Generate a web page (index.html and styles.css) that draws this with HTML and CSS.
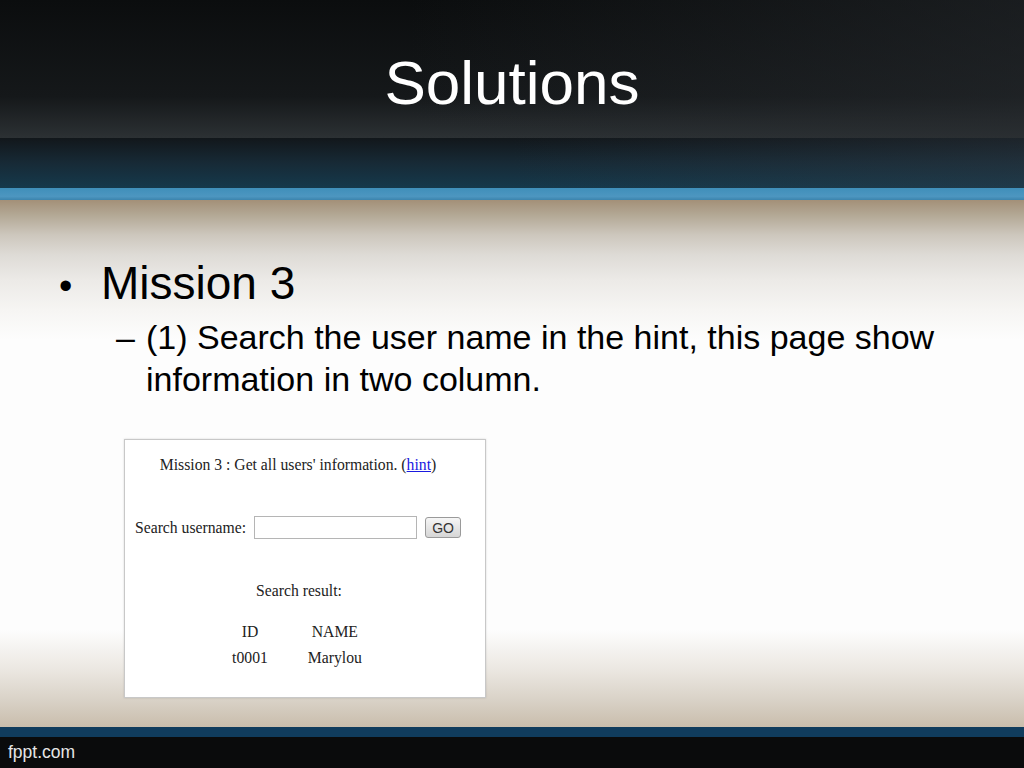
FILE: index.html
```html
<!DOCTYPE html>
<html lang="en">
<head>
  <meta charset="UTF-8" />
  <title>Solutions</title>
  <link rel="stylesheet" href="styles.css">
</head>
<body>

  <div class="slide">
    <!-- Title band -->
    <header class="slide-head">
      <div class="head-top">
        <h1>Solutions</h1>
      </div>
      <div class="head-band"></div>
      <div class="head-stripe"></div>
    </header>

    <!-- Slide body -->
    <main class="slide-body">
      <div class="bullet">
        <span class="bullet-mark">&bull;</span>
        <span class="bullet-text">Mission 3</span>
      </div>
      <div class="sub-bullet">
        <span class="sub-mark">&ndash;</span>
        <span class="sub-text">(1) Search the user name in the hint, this page show information in two column.</span>
      </div>

      <div class="shot">
        <p class="shot-title">Mission 3 : Get all users' information. (<a href="#">hint</a>)</p>
        <form class="shot-form">
          <label>Search username:</label>
          <input type="text" />
          <button type="button">GO</button>
        </form>
        <p class="shot-result">Search result:</p>
        <table class="shot-table">
          <tr><th>ID</th><th>NAME</th></tr>
          <tr><td>t0001</td><td>Marylou</td></tr>
        </table>
      </div>
    </main>

    <!-- Footer -->
    <footer class="slide-foot">
      <div class="foot-stripe"></div>
      <div class="foot-bar">fppt.com</div>
    </footer>
  </div>

</body>
</html>
```

FILE: styles.css
```css
body {
  margin: 0;
  background: #000;
  font-family: "Liberation Sans", Arial, sans-serif;
}

.slide {
  width: 1024px;
  height: 768px;
  display: flex;
  flex-direction: column;
  overflow: hidden;
}

/* header */
.slide-head {
  height: 200px;
  display: flex;
  flex-direction: column;
}

.head-top {
  height: 138px;
  background:
    linear-gradient(to right, rgba(0,0,0,0) 40%, rgba(40,44,48,0.5) 100%),
    linear-gradient(to bottom, #0b0d0e 0%, #15181a 70%, #2c3134 100%);
  display: flex;
  justify-content: center;
}

h1 {
  margin: 0;
  padding-top: 46px;
  color: #ffffff;
  font-weight: normal;
  font-size: 62px;
  line-height: 74px;
  height: 74px;
}

.head-band {
  height: 50px;
  background:
    linear-gradient(to right, rgba(0,0,0,0) 50%, rgba(50,60,70,0.35) 100%),
    linear-gradient(to bottom, #12171b 0%, #172a36 50%, #15394c 100%);
}

.head-stripe {
  height: 12px;
  background: linear-gradient(to bottom, #3f8fba 0%, #4d96c0 70%, #3c84ad 100%);
}

/* body */
.slide-body {
  flex: 1;
  background: linear-gradient(to bottom,
    #a39078 0px, #b3a895 15px, #cdc7bd 35px, #dedbd6 55px, #eceae7 80px,
    #f6f5f3 110px, #fdfdfd 140px, #fdfdfd 430px, #ebe7e1 470px,
    #d9d2c7 500px, #c9bdac 100%);
  padding: 56px 0 0 0;
}

.bullet {
  display: flex;
  align-items: baseline;
  height: 60px;
  color: #000;
}

.bullet-mark {
  padding-left: 59px;
  width: 42px;
  font-size: 38px;
}

.bullet-text {
  font-size: 46px;
}

.sub-bullet {
  display: flex;
  align-items: baseline;
  padding-left: 116px;
  color: #000;
}

.sub-mark {
  width: 30px;
  font-size: 34px;
  flex-shrink: 0;
}

.sub-text {
  font-size: 34px;
  line-height: 42px;
  width: 840px;
}

/* embedded screenshot */
.shot {
  margin: 39px 0 0 124px;
  width: 360px;
  height: 257px;
  background: #fff;
  border: 1px solid #c8c8c8;
  box-shadow: 0 0 2px rgba(0,0,0,0.15);
  font-family: "Liberation Serif", "Times New Roman", serif;
  font-size: 15.7px;
  color: #222;
  display: flex;
  flex-direction: column;
  align-items: center;
}

.shot-title {
  margin: 16px 14px 0 0;
  line-height: 18px;
}

.shot-title a {
  color: #1a1adf;
}

.shot-form {
  display: flex;
  align-items: center;
  align-self: flex-start;
  margin: 42px 0 0 10px;
  gap: 8px;
}

.shot-form input {
  width: 159px;
  height: 19px;
  border: 1px solid #b5b5b5;
  padding: 1px;
  margin: 0;
}

.shot-form button {
  width: 36px;
  height: 21px;
  padding: 0;
  border: 1px solid #9a9a9a;
  border-radius: 3px;
  background: linear-gradient(to bottom, #f6f6f6, #d6d6d6);
  font-family: "Liberation Sans", Arial, sans-serif;
  font-size: 14px;
  color: #333;
}

.shot-result {
  margin: 43px 12px 0 0;
  line-height: 18px;
}

.shot-table {
  margin-top: 19px;
  margin-right: 16px;
  border-spacing: 0;
  font-size: 15.7px;
}

.shot-table th,
.shot-table td {
  font-weight: normal;
  padding: 0 20px;
  height: 26px;
  text-align: center;
}

/* footer */
.slide-foot {
  display: flex;
  flex-direction: column;
}

.foot-stripe {
  height: 10px;
  background: #103c5d;
}

.foot-bar {
  height: 31px;
  background: #0a0b0c;
  color: #e6e6e6;
  font-size: 17.5px;
  padding-left: 8px;
  line-height: 30px;
}
```
